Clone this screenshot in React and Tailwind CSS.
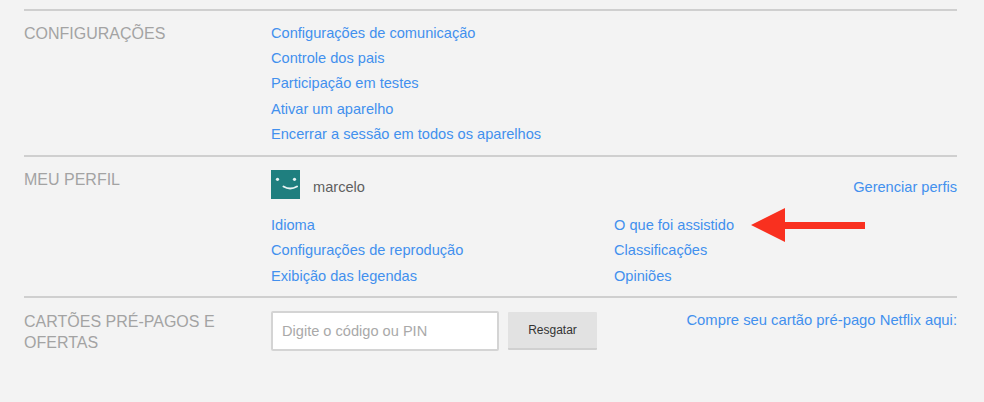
function Link({ children }) {
  return <a className="block h-[25.4px] leading-[25.4px] text-[14.6px] text-[#4290ee] whitespace-nowrap">{children}</a>;
}

function Label({ children }) {
  return <div className="w-[247px] shrink-0 text-[16px] leading-[22px] text-[#a3a3a3]">{children}</div>;
}

export default function App() {
  return (
    <div className="relative w-[984px] h-[402px] overflow-hidden bg-[#f3f3f3] pt-[9px] pl-[24px] pr-[27px] font-['Liberation_Sans',Arial,sans-serif]">
      <section className="flex h-[146px] border-t-2 border-[#cfcfcf] pt-[9.7px]">
        <div className="pt-[2px]"><Label>CONFIGURAÇÕES</Label></div>
        <div>
          <Link>Configurações de comunicação</Link>
          <Link>Controle dos pais</Link>
          <Link>Participação em testes</Link>
          <Link>Ativar um aparelho</Link>
          <Link>Encerrar a sessão em todos os aparelhos</Link>
        </div>
      </section>

      <section className="flex h-[141px] border-t-2 border-[#cfcfcf] pt-[12px]">
        <Label>MEU PERFIL</Label>
        <div className="flex-1">
          <div className="flex items-center h-[30px]">
            <svg width="29" height="29" viewBox="0 0 29 29" className="shrink-0">
              <rect width="29" height="29" fill="#1f7f7f" />
              <circle cx="6.5" cy="9.3" r="1.6" fill="#e8f4f4" />
              <circle cx="23.5" cy="9.3" r="1.6" fill="#e8f4f4" />
              <path d="M12.5 16.5 Q19 20.5 26 16.5" stroke="#e8f4f4" strokeWidth="2" fill="none" strokeLinecap="round" />
            </svg>
            <span className="ml-[13px] pt-[7px] text-[14.6px] text-[#5f5f5f]">marcelo</span>
            <a className="ml-auto pt-[7px] text-[14.6px] text-[#4290ee]">Gerenciar perfis</a>
          </div>
          <div className="flex mt-[14px]">
            <div className="w-[343px]">
              <Link>Idioma</Link>
              <Link>Configurações de reprodução</Link>
              <Link>Exibição das legendas</Link>
            </div>
            <div>
              <Link>O que foi assistido</Link>
              <Link>Classificações</Link>
              <Link>Opiniões</Link>
            </div>
          </div>
        </div>
      </section>

      <section className="flex border-t-2 border-[#cfcfcf] pt-[13px]">
        <div className="w-[247px] shrink-0 text-[16px] leading-[21px] text-[#a3a3a3]">CARTÕES PRÉ-PAGOS E<br />OFERTAS</div>
        <input
          placeholder="Digite o código ou PIN"
          className="w-[228px] h-[40px] rounded-[2px] border-2 border-[#d4d4d4] bg-white px-[9px] text-[14.6px] placeholder:text-[#a9a9a9]"
        />
        <button className="ml-[9px] mt-[1px] w-[89px] h-[38px] rounded-[1px] bg-[#e2e2e2] border-b-2 border-[#d0d0d0] text-[12px] text-[#333]">Resgatar</button>
        <a className="ml-auto mt-[-1px] text-[14.8px] leading-[20px] text-[#4290ee] whitespace-nowrap">Compre seu cartão pré-pago Netflix aqui:</a>
      </section>

      <svg width="116" height="36" viewBox="0 0 116 36" className="absolute left-[750px] top-[207px]">
        <path d="M1 18 L35 1 L35 15 L115 15 L115 22 L35 22 L35 35 Z" fill="#f9301f" />
      </svg>
    </div>
  );
}
